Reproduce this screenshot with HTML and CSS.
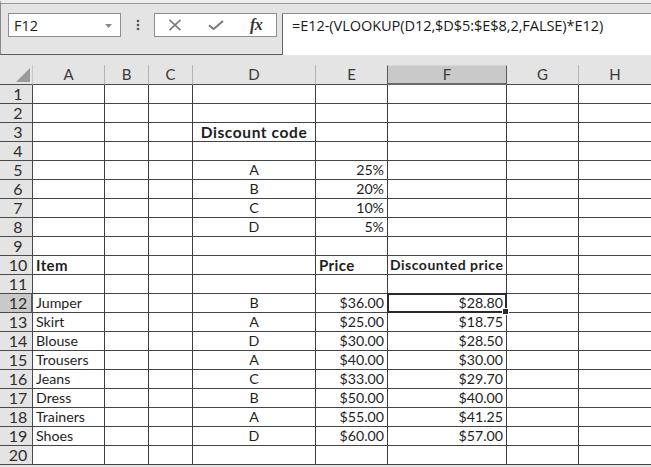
FILE: index.html
```html
<!DOCTYPE html>
<html>
<head>
<meta charset="utf-8">
<title>Discounts</title>
<link rel="stylesheet" href="styles.css">
</head>
<body>
<div class="app">
  <div class="toolbar">
    <div class="namebox">
      <span class="name">F12</span>
      <svg class="caret" width="7" height="4" viewBox="0 0 7 4"><path d="M0 0H7L3.5 4Z" fill="#8a8a8a"/></svg>
    </div>
    <div class="grip">
      <svg width="4" height="12" viewBox="0 0 4 12"><circle cx="2" cy="2" r="1.3" fill="#555"/><circle cx="2" cy="6" r="1.3" fill="#555"/><circle cx="2" cy="10" r="1.3" fill="#555"/></svg>
    </div>
    <div class="buttons">
      <svg class="btn-x" width="14" height="12" viewBox="0 0 14 12"><path d="M1.5 0.8L12.5 11.2M12.5 0.8L1.5 11.2" stroke="#7a7a7a" stroke-width="1.6" fill="none"/></svg>
      <svg class="btn-ok" width="16" height="10" viewBox="0 0 16 10"><path d="M1 5.2L5.6 9L15 1" stroke="#7a7a7a" stroke-width="2" fill="none"/></svg>
      <span class="fx">fx</span>
    </div>
    <div class="formula">=E12-(VLOOKUP(D12,$D$5:$E$8,2,FALSE)*E12)</div>
  </div>

  <div class="sheet">
    <div class="corner"><span class="tri"></span></div>
    <div class="ch">A</div><div class="ch">B</div><div class="ch">C</div><div class="ch">D</div><div class="ch">E</div><div class="ch on">F</div><div class="ch">G</div><div class="ch last">H</div>

    <div class="rh">1</div><div class="c"></div><div class="c"></div><div class="c"></div><div class="c"></div><div class="c"></div><div class="c"></div><div class="c"></div><div class="c last"></div>
    <div class="rh">2</div><div class="c"></div><div class="c"></div><div class="c"></div><div class="c"></div><div class="c"></div><div class="c"></div><div class="c"></div><div class="c last"></div>
    <div class="rh">3</div><div class="c"></div><div class="c"></div><div class="c"></div><div class="c m b title">Discount code</div><div class="c"></div><div class="c"></div><div class="c"></div><div class="c last"></div>
    <div class="rh">4</div><div class="c"></div><div class="c"></div><div class="c"></div><div class="c"></div><div class="c"></div><div class="c"></div><div class="c"></div><div class="c last"></div>
    <div class="rh">5</div><div class="c"></div><div class="c"></div><div class="c"></div><div class="c m">A</div><div class="c r">25%</div><div class="c"></div><div class="c"></div><div class="c last"></div>
    <div class="rh">6</div><div class="c"></div><div class="c"></div><div class="c"></div><div class="c m">B</div><div class="c r">20%</div><div class="c"></div><div class="c"></div><div class="c last"></div>
    <div class="rh">7</div><div class="c"></div><div class="c"></div><div class="c"></div><div class="c m">C</div><div class="c r">10%</div><div class="c"></div><div class="c"></div><div class="c last"></div>
    <div class="rh">8</div><div class="c"></div><div class="c"></div><div class="c"></div><div class="c m">D</div><div class="c r">5%</div><div class="c"></div><div class="c"></div><div class="c last"></div>
    <div class="rh">9</div><div class="c"></div><div class="c"></div><div class="c"></div><div class="c"></div><div class="c"></div><div class="c"></div><div class="c"></div><div class="c last"></div>
    <div class="rh">10</div><div class="c b">Item</div><div class="c"></div><div class="c"></div><div class="c"></div><div class="c b">Price</div><div class="c b small">Discounted price</div><div class="c"></div><div class="c last"></div>
    <div class="rh">11</div><div class="c"></div><div class="c"></div><div class="c"></div><div class="c"></div><div class="c"></div><div class="c"></div><div class="c"></div><div class="c last"></div>
    <div class="rh on">12</div><div class="c">Jumper</div><div class="c"></div><div class="c"></div><div class="c m">B</div><div class="c r">$36.00</div><div class="c r active">$28.80</div><div class="c"></div><div class="c last"></div>
    <div class="rh">13</div><div class="c">Skirt</div><div class="c"></div><div class="c"></div><div class="c m">A</div><div class="c r">$25.00</div><div class="c r">$18.75</div><div class="c"></div><div class="c last"></div>
    <div class="rh">14</div><div class="c">Blouse</div><div class="c"></div><div class="c"></div><div class="c m">D</div><div class="c r">$30.00</div><div class="c r">$28.50</div><div class="c"></div><div class="c last"></div>
    <div class="rh">15</div><div class="c">Trousers</div><div class="c"></div><div class="c"></div><div class="c m">A</div><div class="c r">$40.00</div><div class="c r">$30.00</div><div class="c"></div><div class="c last"></div>
    <div class="rh">16</div><div class="c">Jeans</div><div class="c"></div><div class="c"></div><div class="c m">C</div><div class="c r">$33.00</div><div class="c r">$29.70</div><div class="c"></div><div class="c last"></div>
    <div class="rh">17</div><div class="c">Dress</div><div class="c"></div><div class="c"></div><div class="c m">B</div><div class="c r">$50.00</div><div class="c r">$40.00</div><div class="c"></div><div class="c last"></div>
    <div class="rh">18</div><div class="c">Trainers</div><div class="c"></div><div class="c"></div><div class="c m">A</div><div class="c r">$55.00</div><div class="c r">$41.25</div><div class="c"></div><div class="c last"></div>
    <div class="rh">19</div><div class="c">Shoes</div><div class="c"></div><div class="c"></div><div class="c m">D</div><div class="c r">$60.00</div><div class="c r">$57.00</div><div class="c"></div><div class="c last"></div>
    <div class="rh">20</div><div class="c"></div><div class="c"></div><div class="c"></div><div class="c"></div><div class="c"></div><div class="c"></div><div class="c"></div><div class="c last"></div>
  </div>
</div>
</body>
</html>
```

FILE: styles.css
```css
* { box-sizing: border-box; }

html, body {
  margin: 0;
  padding: 0;
  background: #e4e4e4;
}

.app {
  width: 651px;
  height: 467px;
  overflow: hidden;
  background: #e4e4e4;
  font-family: Lato, "Open Sans", sans-serif;
  color: #1e1e1e;
}

/* ---------- formula bar ---------- */
.toolbar {
  height: 55px;
  display: flex;
  align-items: flex-start;
  padding: 10px 0 0 8px;
  border-top: 3px solid #ededed;
  border-bottom: 1px solid #5c5c5c;
  border-left: 1px solid #8a8a8a;
  box-shadow: inset 0 1px 0 #9a9a9a;
}

.namebox {
  width: 113px;
  height: 24px;
  background: #fff;
  border: 1px solid #8e8e8e;
  display: flex;
  align-items: center;
  justify-content: space-between;
  padding: 0 8px 0 5px;
  margin-left: -1px;
}
.name {
  font-family: "Open Sans", sans-serif;
  font-size: 14.5px;
  color: #222;
}
.caret { margin-top: 1px; }

.grip {
  width: 33px;
  height: 24px;
  display: flex;
  align-items: center;
  justify-content: center;
}

.buttons {
  width: 123px;
  height: 24px;
  background: #fff;
  border: 1px solid #8e8e8e;
  display: flex;
  align-items: center;
  padding-left: 13px;
}
.btn-x { margin-right: 26px; }
.btn-ok { margin-right: 26px; }
.fx {
  font-family: "Liberation Serif", serif;
  font-style: italic;
  font-weight: bold;
  font-size: 16px;
  color: #333;
  letter-spacing: -0.5px;
}

.formula {
  flex: 1;
  margin-left: 5px;
  height: 42px;
  background: #fff;
  border-left: 1px solid #666;
  border-top: 1px solid #8e8e8e;
  padding: 1px 0 0 9px;
  font-family: "Open Sans", sans-serif;
  font-size: 14.6px;
  color: #1a1a1a;
  white-space: nowrap;
  letter-spacing: -0.1px;
}

/* ---------- sheet grid ---------- */
.sheet {
  margin-top: 10px;
  display: grid;
  grid-template-columns: 33px 72px 44px 44px 123px 72px 119px 72px 72px;
  grid-template-rows: 20px repeat(20, 19px);
  font-size: 14.2px;
}

.corner {
  position: relative;
  border-right: 1px solid #c8c8c8;
  border-bottom: 1px solid #4a4a4a;
}
.tri {
  position: absolute;
  right: 2px;
  bottom: 2px;
  width: 0;
  height: 0;
  border-left: 14px solid transparent;
  border-bottom: 14px solid #9a9a9a;
}

.ch {
  background: #e4e4e4;
  border-right: 1px solid #b4b4b4;
  border-bottom: 1px solid #4a4a4a;
  text-align: center;
  font-size: 15px;
  line-height: 19px;
  color: #3a3a3a;
}
.ch.on {
  background: #c9c9c9;
  border-top: 1px solid #d8d8d8;
  border-left: 1px solid #5a5a5a;
  border-right: 1px solid #5a5a5a;
  border-bottom: 2px solid #6a6a6a;
  margin-left: -1px;
  line-height: 17px;
}

.rh {
  background: #e4e4e4;
  border-right: 1px solid #4a4a4a;
  border-bottom: 1px solid #4a4a4a;
  text-align: center;
  padding-left: 4px;
  font-size: 16px;
  line-height: 18px;
  color: #2e2e2e;
}
.rh.on {
  background: #c9c9c9;
  border-right: 2px solid #5a5a5a;
  padding-left: 5px;
}

.c {
  background: #fff;
  border-right: 1px solid #3e3e3e;
  border-bottom: 1px solid #444;
  padding: 0 3px;
  line-height: 18px;
  white-space: nowrap;
  overflow: visible;
  position: relative;
}
.c.last, .ch.last { border-right: none; }
.r { text-align: right; }
.m { text-align: center; }
.b { font-weight: bold; font-size: 15px; letter-spacing: 0.4px; }
.title { font-size: 15.5px; letter-spacing: 0.6px; }
.small { font-size: 14px; letter-spacing: 0.5px; padding-left: 2px; }

/* current cell outline with its fill handle */
.active::after {
  content: "";
  position: absolute;
  left: -1px;
  top: -1px;
  right: -1px;
  bottom: -1px;
  border: 2px solid #2a2a2a;
  pointer-events: none;
}
.active::before {
  content: "";
  position: absolute;
  right: -3px;
  bottom: -3px;
  width: 5px;
  height: 5px;
  background: #2a2a2a;
  border: 1px solid #fff;
  z-index: 2;
}
```
